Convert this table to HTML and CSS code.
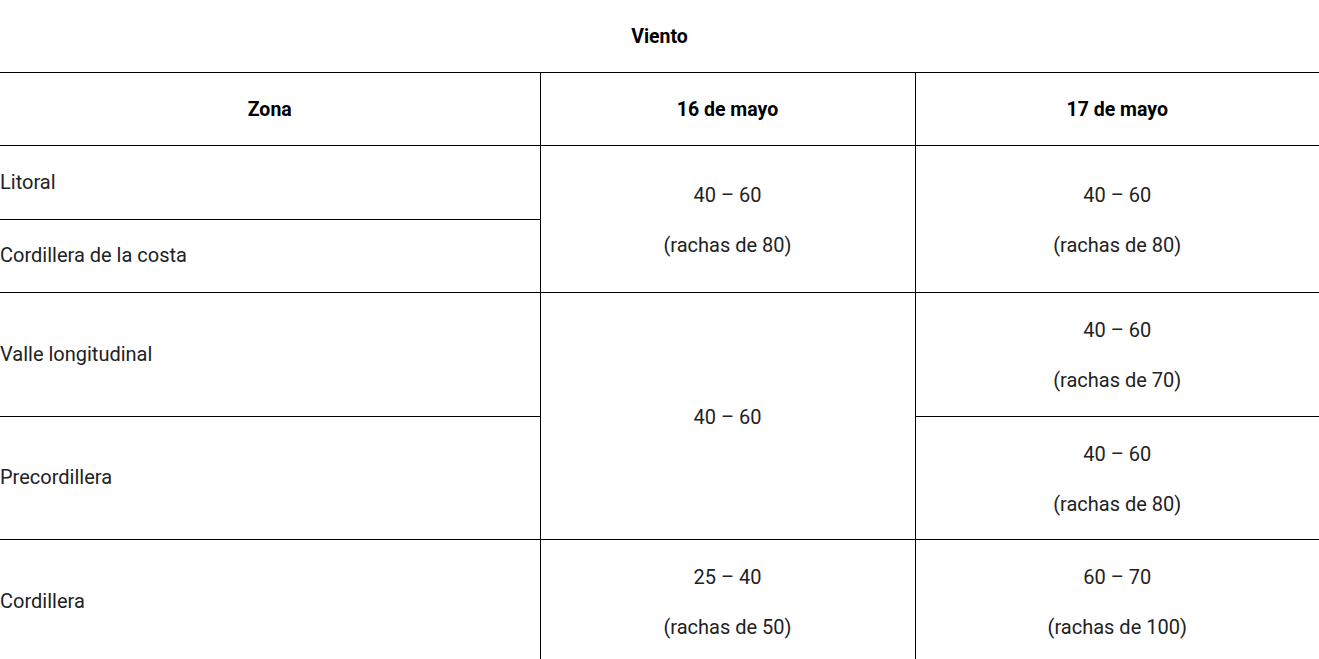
FILE: index.html
```html
<!DOCTYPE html>
<html lang="es">
<head>
<meta charset="utf-8">
<title>Viento</title>
<link rel="stylesheet" href="styles.css">
</head>
<body>
<table class="wind">
  <caption class="wind-caption">Viento</caption>
  <colgroup>
    <col class="col-zone">
    <col class="col-day1">
    <col class="col-day2">
  </colgroup>
  <thead>
    <tr>
      <th>Zona</th>
      <th>16 de mayo</th>
      <th>17 de mayo</th>
    </tr>
  </thead>
  <tbody>
    <tr>
      <td class="zone"><p>Litoral</p></td>
      <td class="val" rowspan="2"><p>40 – 60</p><p>(rachas de 80)</p></td>
      <td class="val" rowspan="2"><p>40 – 60</p><p>(rachas de 80)</p></td>
    </tr>
    <tr>
      <td class="zone"><p>Cordillera de la costa</p></td>
    </tr>
    <tr>
      <td class="zone"><p>Valle longitudinal</p></td>
      <td class="val" rowspan="2"><p>40 – 60</p></td>
      <td class="val"><p>40 – 60</p><p>(rachas de 70)</p></td>
    </tr>
    <tr>
      <td class="zone"><p>Precordillera</p></td>
      <td class="val"><p>40 – 60</p><p>(rachas de 80)</p></td>
    </tr>
    <tr>
      <td class="zone"><p>Cordillera</p></td>
      <td class="val"><p>25 – 40</p><p>(rachas de 50)</p></td>
      <td class="val"><p>60 – 70</p><p>(rachas de 100)</p></td>
    </tr>
  </tbody>
</table>
</body>
</html>
```
FILE: styles.css
```css
html, body {
  margin: 0;
  padding: 0;
  background: #fff;
}
body {
  font-family: Roboto, "Liberation Sans", Arial, sans-serif;
  font-size: 20px;
  color: #222;
}
.wind {
  width: 1319px;
  border-collapse: collapse;
  table-layout: fixed;
}
.col-zone { width: 540px; }
.col-day1 { width: 375px; }
.col-day2 { width: 404px; }
.wind-caption {
  font-weight: 700;
  font-size: 19.5px;
  color: #000;
  line-height: 30px;
  padding: 22px 0 20px;
  text-align: center;
}
.wind th, .wind td {
  border-top: 1px solid #000;
  border-bottom: 1px solid #000;
  padding: 0;
  vertical-align: middle;
}
.wind th + th, .wind td.val {
  border-left: 1px solid #000;
}
.wind th {
  box-sizing: border-box;
  font-weight: 700;
  font-size: 19.5px;
  color: #000;
  height: 73px;
  padding-top: 2px;
  line-height: 30px;
  text-align: center;
}
.wind td p {
  margin: 22.5px 0;
  line-height: 27.5px;
}
.wind td.zone {
  text-align: left;
}
.wind td.val {
  text-align: center;
}
.wind td.val p {
  margin: 0;
}
.wind td.val p:first-child {
  margin-top: 24px;
}
.wind td.val p + p {
  margin-top: 22.5px;
}
.wind td.val p:last-child {
  margin-bottom: 21px;
}
```
